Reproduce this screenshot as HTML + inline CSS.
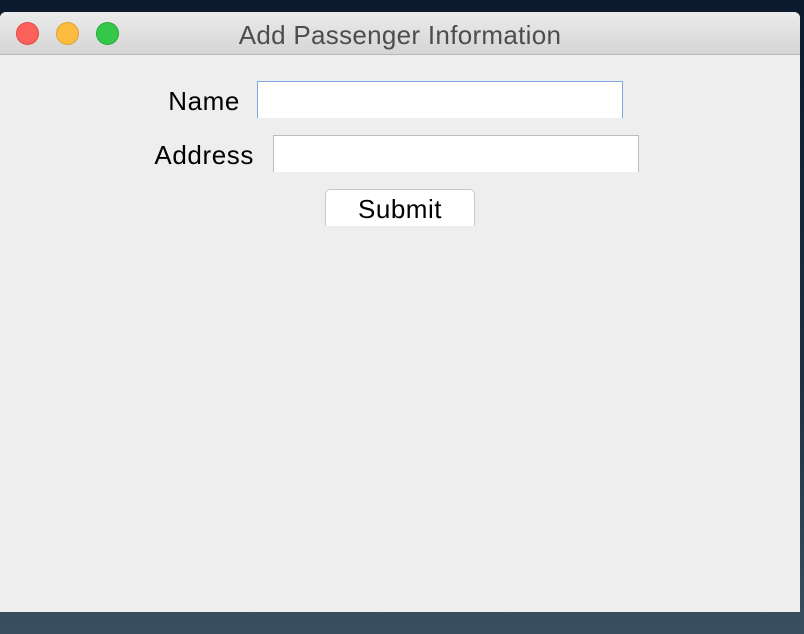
<!DOCTYPE html>
<html><head><style>
body{margin:0;width:804px;height:634px;overflow:hidden;background:linear-gradient(#0b1a2c,#1c3042 60%,#3a5060);position:relative;font-family:"Liberation Sans",sans-serif}
.win{position:absolute;left:0;top:12px;width:800px;height:600px;background:#eeeeee;border-radius:6px 6px 0 0;overflow:hidden}
.tb{height:42px;background:linear-gradient(#ebebeb,#d5d5d5);border-bottom:1px solid #b8b8b8;position:relative}
.dot{position:absolute;top:10px;width:23px;height:23px;border-radius:50%;box-sizing:border-box}
.t{position:absolute;left:0;width:800px;text-align:center;top:8px;font-size:26px;letter-spacing:0.3px;color:#4d4d4d}
.lbl{position:absolute;font-size:26px;letter-spacing:0.6px;color:#000;text-align:right;width:200px}
.f{position:absolute;background:#fff;box-sizing:border-box;height:37px;width:366px}
.bt{position:absolute;left:325px;top:189px;width:150px;height:37px;background:#fff;border:1px solid #c8c8c8;border-bottom:none;border-radius:5px 5px 0 0;box-sizing:border-box;text-align:center;font-size:26px;letter-spacing:0.5px;line-height:38px}
</style></head><body>
<div class="win">
<div class="tb">
<div class="dot" style="left:16px;background:#fc605b;border:1px solid #de4a44"></div>
<div class="dot" style="left:56px;background:#fdbc40;border:1px solid #dea234"></div>
<div class="dot" style="left:96px;background:#34c84a;border:1px solid #27aa35"></div>
<div class="t">Add Passenger Information</div>
</div>
</div>
<div class="lbl" style="left:40px;top:86px">Name</div>
<div class="f" style="left:257px;top:81px;border:1px solid #7fa9e0;border-bottom:none"></div>
<div class="lbl" style="left:54px;top:140px">Address</div>
<div class="f" style="left:273px;top:135px;border:1px solid #bdbdbd;border-bottom:none"></div>
<div class="bt">Submit</div>
</body></html>
